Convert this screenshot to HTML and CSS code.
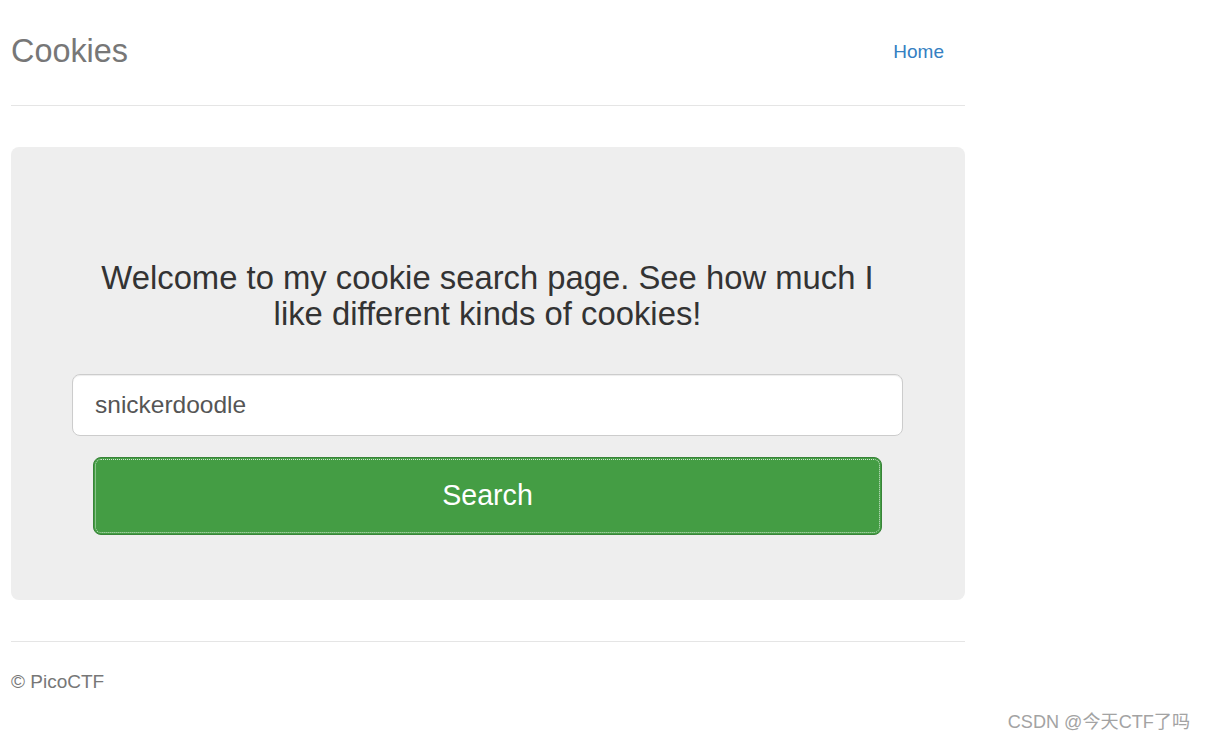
FILE: index.html
```html
<!DOCTYPE html>
<html lang="en">
<head>
<meta charset="utf-8">
<title>Cookies</title>
<link rel="stylesheet" href="styles.css">
</head>
<body>
<div class="page">
  <header class="header">
    <h3 class="brand">Cookies</h3>
    <nav class="nav"><a href="#" class="nav-link">Home</a></nav>
  </header>
  <main class="jumbotron">
    <h3 class="welcome">Welcome to my cookie search page. See how much I like different kinds of cookies!</h3>
    <form class="search-form" onsubmit="return false;">
      <input class="search-input" type="text" value="snickerdoodle">
      <button class="search-btn" type="submit">Search</button>
    </form>
  </main>
  <footer class="footer">
    <p class="copy">&copy; PicoCTF</p>
  </footer>
</div>
<div class="watermark">CSDN @今天CTF了吗</div>
</body>
</html>
```

FILE: styles.css
```css
html, body {
  margin: 0;
  padding: 0;
  background: #fff;
}
body {
  font-family: "Liberation Sans", Arial, sans-serif;
  color: #333;
  width: 1206px;
  height: 741px;
  overflow: hidden;
  position: relative;
}
.page {
  width: 954px;
  margin-left: 11px;
}
.header {
  display: flex;
  justify-content: space-between;
  align-items: flex-start;
  padding-top: 33px;
  padding-bottom: 36px;
  border-bottom: 1px solid #e5e5e5;
}
.brand {
  margin: 0;
  font-size: 32.4px;
  line-height: 36px;
  font-weight: 400;
  color: #777;
}
.nav {
  margin-top: 5px;
  padding-right: 21px;
}
.nav-link {
  font-size: 19px;
  line-height: 27px;
  color: #3580c2;
  text-decoration: none;
  display: block;
}
.jumbotron {
  margin-top: 41px;
  background: #eee;
  border-radius: 8px;
  padding: 113px 62px 65px 61px;
}
.welcome {
  margin: 0 auto;
  width: 800px;
  text-align: center;
  font-size: 32.8px;
  line-height: 36px;
  font-weight: 400;
  color: #333;
}
.search-form {
  margin-top: 42px;
  display: flex;
  flex-direction: column;
  align-items: stretch;
  gap: 21px;
}
.search-input {
  box-sizing: border-box;
  width: 100%;
  height: 62px;
  border: 1px solid #ccc;
  border-radius: 8px;
  background: #fff;
  padding: 0 22px;
  font-family: "Liberation Sans", Arial, sans-serif;
  font-size: 24.5px;
  color: #555;
  outline: none;
  box-shadow: inset 0 1px 1px rgba(0,0,0,.075);
}
.search-btn {
  box-sizing: border-box;
  margin: 0 21px;
  height: 78px;
  padding-bottom: 3px;
  background: #449d44;
  border: 1px solid #398439;
  border-radius: 8px;
  color: #fff;
  font-family: "Liberation Sans", Arial, sans-serif;
  font-size: 28.6px;
  outline: 1px dotted rgba(255,255,255,.75);
  outline-offset: -3px;
  cursor: pointer;
}
.footer {
  margin-top: 41px;
  border-top: 1px solid #e5e5e5;
  padding-top: 26px;
}
.copy {
  margin: 0;
  font-size: 19px;
  line-height: 27px;
  color: #777;
}
.watermark {
  position: absolute;
  right: 16px;
  top: 709px;
  font-family: "Liberation Sans", "Noto Sans CJK SC", sans-serif;
  font-size: 18.1px;
  line-height: 26px;
  color: #a3a3a3;
}
```
